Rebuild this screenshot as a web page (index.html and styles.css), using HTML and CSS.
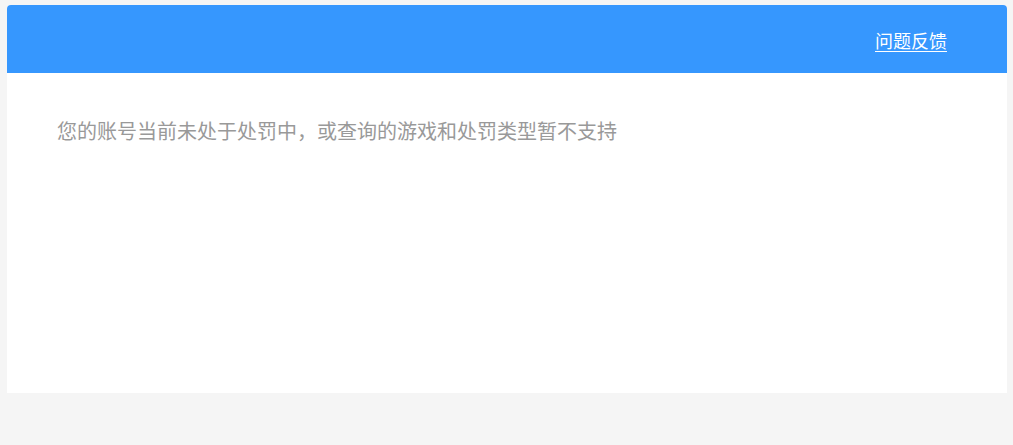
FILE: index.html
```html
<!DOCTYPE html>
<html lang="zh-CN">
<head>
<meta charset="utf-8">
<title>处罚查询</title>
<link rel="stylesheet" href="styles.css">
</head>
<body>
<div class="card">
  <div class="card-header">
    <a class="feedback" href="#">问题反馈</a>
  </div>
  <div class="card-body">
    <p class="message">您的账号当前未处于处罚中，或查询的游戏和处罚类型暂不支持</p>
  </div>
</div>
</body>
</html>
```

FILE: styles.css
```css
html, body {
  margin: 0;
  padding: 0;
}
body {
  background: #f5f5f5;
  font-family: "Noto Sans CJK SC", "Noto Sans", sans-serif;
  padding: 5px 6px 0 7px;
}
.card {
  width: 1000px;
  background: #ffffff;
  border-radius: 4px 4px 0 0;
  overflow: hidden;
}
.card-header {
  height: 68px;
  background: #3697fe;
  display: flex;
  align-items: center;
  justify-content: flex-end;
  padding-right: 60px;
}
.feedback {
  color: #ffffff;
  font-size: 18px;
  line-height: 22px;
  text-decoration: underline;
  text-underline-offset: 3px;
  text-decoration-thickness: 1px;
  margin-top: 2px;
}
.card-body {
  height: 320px;
  box-sizing: border-box;
  padding: 47px 50px 0 50px;
}
.message {
  margin: 0;
  color: #999999;
  font-size: 20px;
  line-height: 22px;
}
```
